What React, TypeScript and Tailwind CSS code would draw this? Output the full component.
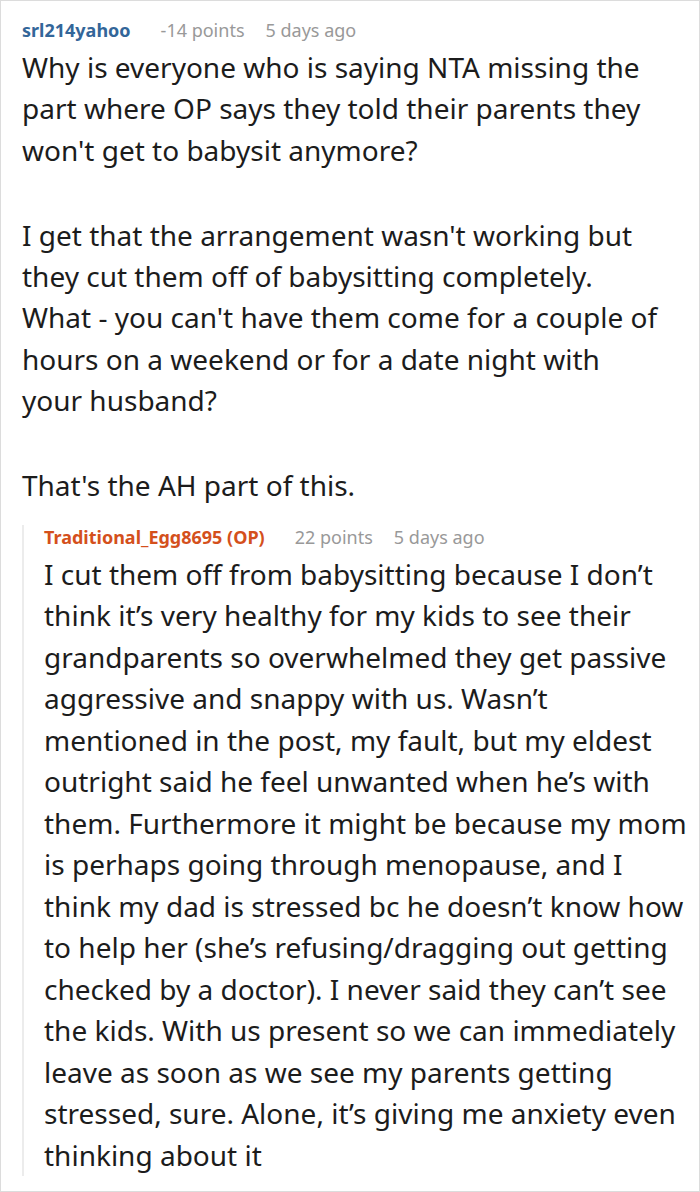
const font = { fontFamily: '"Noto Sans", "Open Sans", sans-serif' }

function Meta({
  user,
  userClass,
  points,
  age,
}: {
  user: string
  userClass: string
  points: string
  age: string
}) {
  return (
    <div className="flex items-baseline text-[18px] leading-[24px]">
      <span className={`font-bold ${userClass}`}>{user}</span>
      <span className="ml-[30px] text-[#999]">{points}</span>
      <span className="ml-[21px] text-[#999]">{age}</span>
    </div>
  )
}

export default function App() {
  return (
    <div
      style={font}
      className="h-[1192px] w-[700px] overflow-hidden border border-[#dcdcdc] bg-white pl-[21px] pr-[4px] pt-[17px] text-[#1c1c1c]"
    >
      <Meta user="srl214yahoo" userClass="text-[#336699]" points="-14 points" age="5 days ago" />
      <div className="mt-[5px] w-[636px] text-[28px] leading-[41.3px]">
        <p>
          Why is everyone who is saying NTA missing the part where OP says they told their parents they
          won't get to babysit anymore?
        </p>
        <p className="mt-[44px]">
          I get that the arrangement wasn't working but they cut them off of babysitting completely.
          <br />
          What - you can't have them come for a couple of hours on a weekend or for a date night with
          your husband?
        </p>
        <p className="mt-[44px]">That's the AH part of this.</p>
      </div>

      <div className="mt-[18px] border-l-2 border-[#ececec] pl-[20px]">
        <Meta
          user="Traditional_Egg8695 (OP)"
          userClass="text-[#d4501c]"
          points="22 points"
          age="5 days ago"
        />
        <p className="mt-[5px] text-[28px] leading-[41.5px]">
          I cut them off from babysitting because I don’t think it’s very healthy for my kids to see
          their grandparents so overwhelmed they get passive aggressive and snappy with us. Wasn’t
          mentioned in the post, my fault, but my eldest outright said he feel unwanted when he’s with
          them. Furthermore it might be because my mom is perhaps going through menopause, and I think
          my dad is stressed bc he doesn’t know how to help her (she’s refusing/dragging out getting
          checked by a doctor). I never said they can’t see the kids. With us present so we can
          immediately leave as soon as we see my parents getting stressed, sure. Alone, it’s giving me
          anxiety even thinking about it
        </p>
      </div>
    </div>
  )
}
